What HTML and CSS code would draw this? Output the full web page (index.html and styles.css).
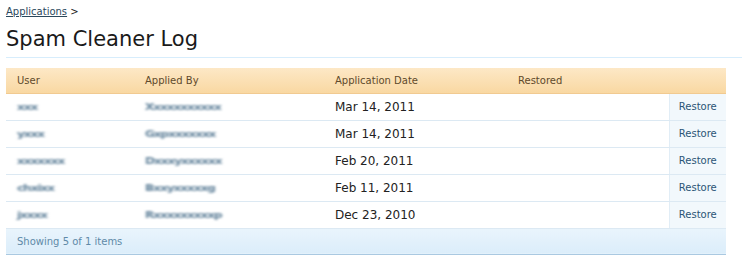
FILE: index.html
```
<!DOCTYPE html>
<html lang="en">
  <head>
    <meta charset="UTF-8" />
    <title>Spam Cleaner Log</title>
    <link rel="stylesheet" href="styles.css">
  </head>
  <body>
    <div class="page">
      <div class="crumbs"><a href="#">Applications</a> &gt;</div>
      <h1 class="title">Spam Cleaner Log</h1>

      <table class="log">
        <thead>
          <tr>
            <th class="c-user">User</th>
            <th class="c-by">Applied By</th>
            <th class="c-date">Application Date</th>
            <th class="c-rest">Restored</th>
            <th class="c-act"></th>
          </tr>
        </thead>
        <tbody>
          <tr>
            <td><span class="blur">xxx</span></td>
            <td><span class="blur">Xxxxxxxxxxx</span></td>
            <td class="date">Mar 14, 2011</td>
            <td></td>
            <td class="act"><a href="#">Restore</a></td>
          </tr>
          <tr>
            <td><span class="blur">yxxx</span></td>
            <td><span class="blur">Gxpxxxxxxx</span></td>
            <td class="date">Mar 14, 2011</td>
            <td></td>
            <td class="act"><a href="#">Restore</a></td>
          </tr>
          <tr>
            <td><span class="blur">xxxxxxx</span></td>
            <td><span class="blur">Dxxxyxxxxxx</span></td>
            <td class="date">Feb 20, 2011</td>
            <td></td>
            <td class="act"><a href="#">Restore</a></td>
          </tr>
          <tr>
            <td><span class="blur">chxixx</span></td>
            <td><span class="blur">Bxxyxxxxxg</span></td>
            <td class="date">Feb 11, 2011</td>
            <td></td>
            <td class="act"><a href="#">Restore</a></td>
          </tr>
          <tr>
            <td><span class="blur">jxxxx</span></td>
            <td><span class="blur">Rxxxxxxxxxp</span></td>
            <td class="date">Dec 23, 2010</td>
            <td></td>
            <td class="act"><a href="#">Restore</a></td>
          </tr>
        </tbody>
        <tfoot>
          <tr>
            <td colspan="5">Showing 5 of 1 items</td>
          </tr>
        </tfoot>
      </table>
    </div>
  </body>
</html>
```
FILE: styles.css
```
* {
  margin: 0;
  padding: 0;
  box-sizing: border-box;
}

body {
  background: #fff;
  font-family: "DejaVu Sans", "Liberation Sans", sans-serif;
  color: #222;
}

.page {
  padding: 5px 0 0 6px;
}

.crumbs {
  font-size: 10px;
  color: #222;
  line-height: 14px;
}

.crumbs a {
  color: #2b485c;
}

.title {
  font-weight: normal;
  font-size: 21px;
  line-height: 28px;
  color: #1a1a1a;
  padding: 6px 0 4px;
  border-bottom: 1px solid #d7edfc;
}

.log {
  margin-top: 10px;
  width: 720px;
  border-collapse: collapse;
  font-size: 11px;
}

.log thead th {
  height: 25px;
  text-align: left;
  font-weight: normal;
  font-size: 10px;
  color: #5f4a2b;
  padding: 0 11px;
  background: linear-gradient(#fde8c6, #f9d8a2);
  border-bottom: 1px solid #f1ca91;
}

.log th.c-user { width: 128px; }
.log th.c-by { width: 190px; }
.log th.c-date { width: 183px; }
.log th.c-act { width: 57px; }

.log tbody td {
  height: 27px;
  padding: 0 11px;
  border-bottom: 1px solid #dce9f3;
}

.log td.date {
  font-size: 12px;
  color: #222;
}

.blur {
  display: inline-block;
  color: #5f8099;
  font-size: 12px;
  font-weight: bold;
  letter-spacing: -1px;
  filter: blur(1.4px);
  transform: scaleY(0.75);
}

.log td.act {
  background: #f2f8fc;
  border-left: 1px solid #e1edf6;
  text-align: center;
  padding: 0;
}

.log td.act a {
  color: #2b5576;
  text-decoration: none;
  font-size: 10px;
}

.log tfoot td {
  height: 26px;
  padding: 0 11px;
  font-size: 10px;
  color: #5f8aa8;
  background: linear-gradient(#e9f4fc, #dbedfa);
  border-bottom: 1px solid #aac9e1;
}
```
